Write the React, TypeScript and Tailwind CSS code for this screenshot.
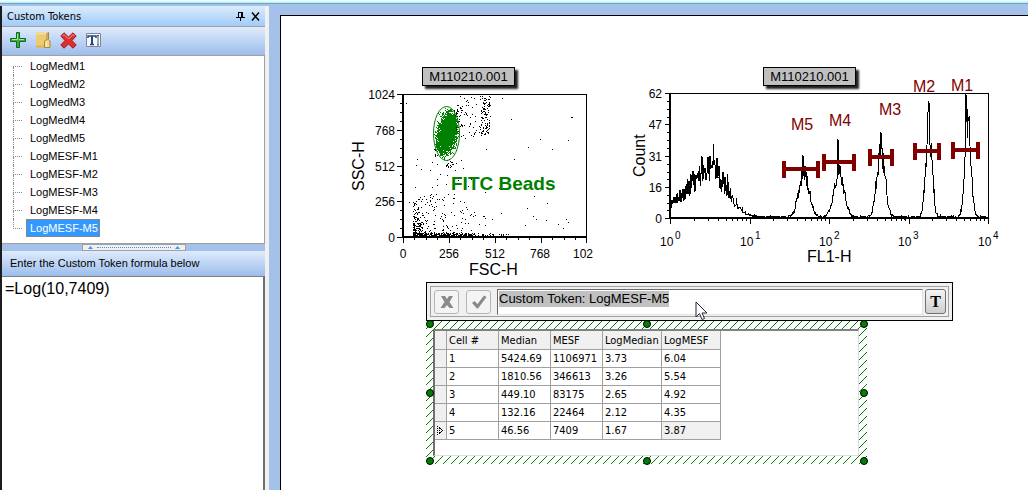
import React, { useState } from 'react';

const TOKENS = [
  'LogMedM1',
  'LogMedM2',
  'LogMedM3',
  'LogMedM4',
  'LogMedM5',
  'LogMESF-M1',
  'LogMESF-M2',
  'LogMESF-M3',
  'LogMESF-M4',
  'LogMESF-M5',
];

const COLUMNS = ['Cell #', 'Median', 'MESF', 'LogMedian', 'LogMESF'];

const ROWS = [
  ['1', '5424.69', '1106971', '3.73', '6.04'],
  ['2', '1810.56', '346613', '3.26', '5.54'],
  ['3', '449.10', '83175', '2.65', '4.92'],
  ['4', '132.16', '22464', '2.12', '4.35'],
  ['5', '46.56', '7409', '1.67', '3.87'],
];

// small seeded generator so the plots are the same on every render
const makeRandom = (seed: number) => () => {
  seed = (seed * 1664525 + 1013904223) % 4294967296;
  return seed / 4294967296;
};

const dot = (x: number, y: number) => `M${Math.round(x)} ${Math.round(y)}h1v1h-1z`;

const buildEvents = () => {
  const rnd = makeRandom(7);
  const bell = () => rnd() + rnd() + rnd() + rnd() - 2;
  let d = '';
  const fill = (n: number, x0: number, x1: number, y0: number, y1: number) => {
    for (let i = 0; i < n; i++) d += dot(x0 + rnd() * (x1 - x0), y0 + rnd() * (y1 - y0));
  };
  fill(85, 480, 490, 96, 134);
  fill(75, 456, 490, 96, 138);
  fill(35, 454, 462, 104, 128);
  fill(16, 445, 453, 160, 170);
  fill(10, 434, 440, 148, 156);
  fill(40, 414, 470, 158, 212);
  fill(70, 413, 445, 195, 234);
  fill(35, 440, 485, 212, 234);
  fill(38, 405, 582, 98, 234);
  // debris along the bottom of the plot
  for (let i = 0; i < 150; i++) d += dot(413 + rnd() * rnd() * 20, 235 - rnd() * rnd() * 42);
  for (let i = 0; i < 170; i++) d += dot(413 + rnd() * 62, 235 - rnd() * rnd() * 4);
  for (let i = 0; i < 60; i++) d += dot(413 + rnd() * 95, 235 - rnd() * 2);

  let beads = '';
  for (let i = 0; i < 3600; i++) {
    const a = bell();
    const x = 447 + bell() * 8 - a * 3;
    const y = 132 + a * 17;
    if (((x - 446) / 12) ** 2 + ((y - 133) / 26) ** 2 < 1) beads += dot(x, y);
  }
  return { debris: d, beads };
};

const PEAKS = [
  { x: 804, h: 46, s: 5, tip: 803, tipH: 62 },
  { x: 839, h: 46, s: 5, tip: 838, tipH: 79 },
  { x: 881, h: 68, s: 4, tip: 881, tipH: 84 },
  { x: 929, h: 94, s: 3, tip: 929, tipH: 117 },
  { x: 968, h: 98, s: 3, tip: 966, tipH: 124 },
];

const buildHistogram = () => {
  const rnd = makeRandom(21);
  const points: string[] = [];
  for (let x = 671; x < 988; x += 0.5) {
    const side = x < 712 ? 25 : 15;
    let h = 52 * Math.exp(-((x - 712) ** 2) / (2 * side * side));
    h *= 0.6 + rnd() * 0.6 + (rnd() > 0.93 ? 0.3 : 0);
    PEAKS.forEach(p => {
      h += p.h * Math.exp(-((x - p.x) ** 2) / (2 * p.s * p.s)) * (0.75 + rnd() * 0.45);
      if (x === p.tip) h = p.tipH;
    });
    h += rnd() * 2;
    points.push(`${x},${(218 - Math.min(h, 124)).toFixed(1)}`);
  }
  return points.join(' ');
};

const EVENTS = buildEvents();
const HISTOGRAM = buildHistogram();

const MARKERS = [
  { name: 'M5', x1: 784, x2: 818, y: 169, tx: 791, ty: 130 },
  { name: 'M4', x1: 824, x2: 854, y: 162, tx: 829, ty: 126 },
  { name: 'M3', x1: 870, x2: 892, y: 157, tx: 879, ty: 115 },
  { name: 'M2', x1: 915, x2: 939, y: 151, tx: 913, ty: 92 },
  { name: 'M1', x1: 953, x2: 978, y: 150, tx: 951, ty: 91 },
];

const PlotTitle: React.FC<{ className: string }> = ({ className }) => (
  <figcaption
    className={`flex h-[19px] w-[93px] items-center justify-center border border-black bg-[#c0c0c0] text-[13px] leading-none shadow-[3px_3px_2px_#222] ${className}`}
  >
    M110210.001
  </figcaption>
);

const ScatterPlot = () => (
  <figure className="shrink-0">
    <PlotTitle className="ml-[77px]" />
    <svg width="255" height="192" viewBox="345 86 255 192" className="block overflow-visible" fontSize="12">
      <path d={EVENTS.debris} shapeRendering="crispEdges" />
      <path d={EVENTS.beads} fill="#008000" shapeRendering="crispEdges" />
      <ellipse cx="446.500" cy="133.500" rx="13" ry="27" fill="none" stroke="#008000" />
      <g shapeRendering="crispEdges" stroke="#000" fill="none">
        <path d="M403 94.500H586.500V237" />
        <path d="M403.500 94V238M402.500 94V238M402 236.500H587M402 237.500H587" />
        {[94, 130, 166, 201, 237].map(y => (
          <path key={y} d={`M397 ${y + 0.5}H403`} />
        ))}
        {[403, 449, 495, 541, 586].map(x => (
          <path key={x} d={`M${x + 0.5} 237V243`} />
        ))}
        {[103, 112, 121, 139, 148, 157, 175, 184, 192, 210, 219, 228].map(y => (
          <path key={y} d={`M400 ${y + 0.5}H403`} />
        ))}
        {[414, 426, 437, 460, 472, 483, 506, 518, 529, 552, 564, 575].map(x => (
          <path key={x} d={`M${x + 0.5} 237V240`} />
        ))}
      </g>
      <g textAnchor="end">
        <text x="395" y="99">1024</text>
        <text x="395" y="135">768</text>
        <text x="395" y="171">512</text>
        <text x="395" y="206">256</text>
        <text x="395" y="242">0</text>
      </g>
      <g textAnchor="middle">
        <text x="403" y="258">0</text>
        <text x="449" y="258">256</text>
        <text x="495" y="258">512</text>
        <text x="540" y="258">768</text>
        <text x="583" y="258">102</text>
      </g>
      <text x="469" y="275" fontSize="16">FSC-H</text>
      <text transform="translate(364 191) rotate(-90)" fontSize="16">SSC-H</text>
      <text x="451" y="190" fontSize="19" fontWeight="bold" fill="#008000">FITC Beads</text>
    </svg>
  </figure>
);

const Histogram = () => (
  <figure className="shrink-0">
    <PlotTitle className="ml-[138px]" />
    <svg width="380" height="192" viewBox="625 86 380 192" className="block overflow-visible" fontSize="12">
      <g shapeRendering="crispEdges" stroke="#000" fill="none">
        <polyline points={HISTOGRAM} />
        <path d="M670 93.500H988.500V218" />
        <path d="M669.500 93V219M670.500 93V219M669 217.500H989M669 218.500H989" />
        {[93, 124, 156, 187, 218].map(y => (
          <path key={y} d={`M665 ${y + 0.5}H670`} />
        ))}
        {[101, 109, 117, 132, 140, 148, 164, 172, 179, 195, 203, 210].map(y => (
          <path key={y} d={`M667 ${y + 0.5}H670`} />
        ))}
        {[0, 1, 2, 3, 4].map(n => (
          <path key={n} d={`M${Math.round(670 + n * 79.5) + 0.5} 218V224`} />
        ))}
        {[0, 1, 2, 3].map(n =>
          [2, 3, 4, 5, 6, 7, 8, 9].map(k => (
            <path key={`${n}-${k}`} d={`M${Math.round(670 + (n + Math.log10(k)) * 79.5) + 0.5} 218V221`} />
          ))
        )}
      </g>
      <g textAnchor="end">
        <text x="662" y="98">62</text>
        <text x="662" y="129">47</text>
        <text x="662" y="161">31</text>
        <text x="662" y="192">16</text>
        <text x="662" y="223">0</text>
      </g>
      {[660, 740, 819, 898, 978].map((x, n) => (
        <g key={x}>
          <text x={x} y="246">10</text>
          <text x={x + 15} y="239" fontSize="10">{n}</text>
        </g>
      ))}
      <text x="807" y="262" fontSize="16">FL1-H</text>
      <text transform="translate(645 177) rotate(-90)" fontSize="16">Count</text>
      {MARKERS.map(m => (
        <g key={m.name}>
          <path
            d={`M${m.x1} ${m.y}H${m.x2}M${m.x1} ${m.y - 8}V${m.y + 9}M${m.x2} ${m.y - 8}V${m.y + 9}`}
            stroke="#800000"
            strokeWidth="4"
          />
          <text x={m.tx} y={m.ty} fontSize="16" fill="#800000">{m.name}</text>
        </g>
      ))}
    </svg>
  </figure>
);

const AddIcon = () => (
  <svg width="16" height="16" viewBox="0 0 16 16">
    <path d="M6.500 .5h3v6h6v3h-6v6h-3v-6h-6v-3h6z" fill="#3fae3f" stroke="#0b6b1c" />
    <path d="M7.500 2v5.500H2M9 7.500h5" fill="none" stroke="#a5e6a0" />
  </svg>
);

const FolderIcon = () => (
  <svg width="16" height="16" viewBox="0 0 16 16">
    <path d="M1 .5h11v15H1z" fill="#eccb72" />
    <path d="M1 .5h11v2H1z" fill="#f5dd98" />
    <path d="M1 13.500h11v2H1z" fill="#d9b356" />
    <path d="M9.500 15.500V9.500l1-1.500h1.500V1.500l1.500-1v7l1.500 1.500v6.500z" fill="#f0d58a" stroke="#a98638" />
    <path d="M11.500 10v5" stroke="#fff2c4" />
  </svg>
);

const DeleteIcon = () => (
  <svg width="17" height="17" viewBox="0 0 17 17">
    <path
      d="M4 .8 8.500 5 13 .8 16.200 4 12 8.500l4.200 4.500-3.200 3.200-4.500-4.200L4 16.200.8 13 5 8.500.8 4z"
      fill="#de2d2d"
      stroke="#a81818"
      strokeLinejoin="round"
    />
    <path d="M2.500 4 4 2.500 8.500 7 13 2.500 14.500 4" fill="none" stroke="#f79a9a" />
  </svg>
);

const TextIcon = () => (
  <svg width="15" height="15" viewBox="0 0 15 15">
    <path d="M.5 .5h14v13H.5z" fill="#f5f8ff" stroke="#7d8896" />
    <path d="M2 5V3h8v2M4 11.500h4" fill="none" stroke="#27477f" strokeWidth="1.500" />
    <path d="M5 3h2v8H5z" fill="#27477f" />
    <path d="M12 3v9M11 2.500h2M11 12h2" stroke="#555" />
  </svg>
);

const TOOLS = [
  { label: 'Add token', Icon: AddIcon },
  { label: 'Edit token', Icon: FolderIcon },
  { label: 'Delete token', Icon: DeleteIcon },
  { label: 'Insert text', Icon: TextIcon },
];

const TokenTree: React.FC<{ selected: string; onSelect: (t: string) => void }> = ({ selected, onSelect }) => (
  <ul className="h-[188px] border-r border-b border-[#a0a0a0] bg-white pt-px pl-[11px]">
    {TOKENS.map((token, i) => (
      <li key={token} className="flex h-[18px] items-center">
        <span className="flex h-full w-[9px] flex-col">
          <span className={`h-[10px] border-b border-dotted border-[#888] ${i > 0 ? 'border-l' : ''}`} />
          <span className={`flex-1 border-dotted border-[#888] ${i < TOKENS.length - 1 ? 'border-l' : ''}`} />
        </span>
        <button
          type="button"
          onClick={() => onSelect(token)}
          className={`ml-1 h-[18px] border pr-px pl-[3px] text-[11px] leading-4 ${
            token === selected
              ? 'border-dotted border-[#cc7722] bg-[#3399ff] text-white'
              : 'border-transparent text-black'
          }`}
        >
          {token}
        </button>
      </li>
    ))}
  </ul>
);

const HANDLES = [
  '-top-px left-0',
  '-top-px left-1/2 -translate-x-1/2',
  '-top-px -right-px',
  'top-1/2 left-0 -translate-y-1/2',
  'top-1/2 -right-px -translate-y-1/2',
  '-bottom-px left-0',
  '-bottom-px left-1/2 -translate-x-1/2',
  '-bottom-px -right-px',
];

const StatsGrid = () => (
  <div className="relative w-[441px] py-2 pr-2 pl-[7px]">
    <svg className="absolute inset-0 h-full w-full" aria-hidden="true">
      <defs>
        <pattern id="hatch" width="8" height="8" patternUnits="userSpaceOnUse">
          <path d="M0 8L8 0" stroke="#008000" shapeRendering="crispEdges" />
        </pattern>
      </defs>
      <rect width="100%" height="100%" fill="url(#hatch)" />
    </svg>
    <div className="relative h-[127px] border-t-2 border-r border-b border-l-2 border-t-[#808080] border-r-[#e0e0e0] border-b-[#e0e0e0] border-l-[#707070] bg-white">
      <table className="w-[286px] table-fixed border-separate border-spacing-0 text-left font-['DejaVu_Sans_Condensed','DejaVu_Sans',sans-serif] text-[11px] leading-4">
        <colgroup>
          <col className="w-[12px]" />
          <col className="w-[52px]" />
          <col className="w-[52px]" />
          <col className="w-[52px]" />
          <col className="w-[59px]" />
          <col className="w-[59px]" />
        </colgroup>
        <thead>
          <tr className="h-[19px] bg-[#f0f0f0]">
            <th className="border-r border-b border-[#a0a0a0] p-0" aria-label="Current row" />
            {COLUMNS.map(c => (
              <th key={c} className="border-r border-b border-[#a0a0a0] p-0 pt-[2px] pl-[2px] font-normal whitespace-nowrap">{c}</th>
            ))}
          </tr>
        </thead>
        <tbody>
          {ROWS.map((row, r) => (
            <tr key={row[0]} className="h-[18px]">
              <td className="border-r border-b border-[#a0a0a0] bg-[#f0f0f0] p-0">
                {r === ROWS.length - 1 && (
                  <svg width="7" height="9" viewBox="0 0 7 9" className="ml-[2px] block" shapeRendering="crispEdges">
                    <path
                      d="M0 0h1v1h-1zM0 2h1v1h-1zM0 4h1v1h-1zM0 6h1v1h-1zM0 8h1v1h-1zM2 1h1v2h-1zM3 2h1v1h-1zM4 3h1v1h-1zM5 4h1v1h-1zM4 5h1v1h-1zM3 6h1v1h-1zM2 6h1v2h-1zM2 4h1v1h-1z"
                      fill="#000"
                    />
                  </svg>
                )}
              </td>
              {row.map((cell, c) => (
                <td
                  key={c}
                  className={`border-r border-b border-[#a0a0a0] p-0 pt-px pl-[2px] ${
                    r === ROWS.length - 1 && c === row.length - 1 ? 'bg-[#f0f0f0]' : ''
                  }`}
                >
                  {cell}
                </td>
              ))}
            </tr>
          ))}
        </tbody>
      </table>
    </div>
    {HANDLES.map(pos => (
      <span key={pos} className={`absolute h-2 w-2 rounded-full border border-black bg-[#008000] ${pos}`} />
    ))}
  </div>
);

const FormulaBar: React.FC<{ token: string }> = ({ token }) => (
  <div className="relative w-[527px] border border-black bg-[#f0f0f0] p-[3px]">
    <div className="flex h-[31px] items-center border border-[#a0a0a0] bg-[#f0f0f0] pr-[2px] pl-[3px]">
      <button type="button" aria-label="Cancel" className="flex h-6 w-[25px] items-center justify-center rounded-[3px] border border-[#b5b5b5] bg-[#f4f4f4]">
        <svg width="14" height="12" viewBox="0 0 14 12">
          <path d="M1 0h4l2 3 2-3h4L9.500 6l4 6h-4L7 9l-2.500 3h-4l4-6z" fill="#8a8a8a" />
        </svg>
      </button>
      <button type="button" aria-label="Accept" className="ml-[7px] flex h-6 w-[25px] items-center justify-center rounded-[3px] border border-[#b5b5b5] bg-[#f4f4f4]">
        <svg width="16" height="14" viewBox="0 0 16 14">
          <path d="M1 8l2.500-2L6.500 9 13 .5 15.500 2 7 13.500H6z" fill="#8a8a8a" />
        </svg>
      </button>
      <div className="ml-[6px] flex h-[26px] flex-1 items-start border-t border-r border-b border-l border-t-[#696969] border-r-[#e3e3e3] border-b-[#e3e3e3] border-l-[#696969] bg-white pt-px pl-px">
        <input
          type="text"
          aria-label="Formula"
          value={token}
          readOnly
          className="field-sizing-content h-4 bg-[#c0c0c0] text-[13px] leading-4 outline-none"
        />
      </div>
      <button
        type="button"
        aria-label="Text format"
        className="ml-[2px] flex h-[25px] w-[21px] items-center justify-center rounded-[3px] border border-[#707070] bg-linear-to-b from-[#f4f4f4] to-[#cfcfcf] font-['Liberation_Serif',serif] text-base leading-none font-bold"
      >
        T
      </button>
    </div>
    <svg width="13" height="20" viewBox="0 0 13 20" className="absolute top-[18px] left-[268px]" aria-hidden="true">
      <path d="M1 1v15l3.500-3.500L7 18.500l2.500-1L7 12h5z" fill="#fff" stroke="#26263c" />
    </svg>
  </div>
);

const App = () => {
  const [selected, setSelected] = useState('LogMESF-M5');
  const [formula, setFormula] = useState('=Log(10,7409)');

  return (
    <div className="min-h-screen bg-white pr-[3px] pb-[5px] font-['Liberation_Sans',Arial,sans-serif] text-black">
      <div className="flex min-h-[calc(100vh-5px)] flex-col bg-[#a3c1e9]">
        <div className="h-1 border-b border-[#6fa3b8] bg-linear-to-b from-white to-[#a8f0fa]" />
        <div className="flex flex-1">
          <aside className="mt-[2px] flex w-[269px] shrink-0 flex-col border-r-4 border-l-2 border-r-[#f0f0f0] border-l-[#1c1c1c]">
            <header className="flex h-[21px] items-center border-b border-[#a0a0a0] bg-linear-to-b from-[#dcecfd] to-[#a0cbf8] pr-[5px] pl-[5px]">
              <h1 className="flex-1 pt-[2px] font-['DejaVu_Sans_Condensed','DejaVu_Sans',sans-serif] text-[11px]">Custom Tokens</h1>
              <button type="button" aria-label="Pin panel" className="mr-[6px]">
                <svg width="9" height="9" viewBox="0 0 9 9" className="block" shapeRendering="crispEdges">
                  <path d="M2.500 5V.5h4V5M5.500 0v5M0 5.500h9M4.500 5v4" fill="none" stroke="#000" />
                </svg>
              </button>
              <button type="button" aria-label="Close panel">
                <svg width="9" height="9" viewBox="0 0 9 9" className="block">
                  <path d="M1 .5l7 8M8 .5l-7 8" stroke="#000" strokeWidth="1.500" />
                </svg>
              </button>
            </header>
            <div className="flex h-[29px] items-start gap-[9px] border-b border-[#a0a0a0] bg-linear-to-b from-[#dfebfc] to-[#9dbdec] pt-[5px] pl-2">
              {TOOLS.map(({ label, Icon }) => (
                <button key={label} type="button" aria-label={label} className="flex h-4 items-center">
                  <Icon />
                </button>
              ))}
            </div>
            <TokenTree selected={selected} onSelect={setSelected} />
            <div className="flex h-[7px] justify-center">
              <div className="flex w-[104px] items-center gap-1 border border-[#a0a0a0] bg-[#f0f0f0] px-[5px]">
                <svg width="5" height="3" viewBox="0 0 5 3"><path d="M0 3L2.500 0 5 3z" fill="#3399ff" /></svg>
                <span className="flex-1 border-t border-dotted border-[#3399ff]" />
                <svg width="5" height="3" viewBox="0 0 5 3"><path d="M0 3L2.500 0 5 3z" fill="#3399ff" /></svg>
              </div>
            </div>
            <label
              htmlFor="formula"
              className="flex h-[25px] items-center bg-linear-to-b from-[#dfebfc] to-[#9dbdec] pl-2 text-[11px]"
            >
              Enter the Custom Token formula below
            </label>
            <textarea
              id="formula"
              value={formula}
              onChange={e => setFormula(e.target.value)}
              className="block w-full flex-1 resize-none border-t border-r-2 border-t-[#808080] border-r-[#707070] bg-white px-[3px] pt-[2px] text-base leading-5 outline-none"
            />
          </aside>

          <main className="mt-[11px] ml-[11px] min-w-0 flex-1 overflow-hidden border-t border-l border-black bg-white">
            <div className="flex gap-[25px] pt-[51px] pl-16">
              <ScatterPlot />
              <Histogram />
            </div>
            <div className="mt-1 ml-[145px]">
              <FormulaBar token={`Custom Token: ${selected}`} />
              <StatsGrid />
            </div>
          </main>
        </div>
      </div>
    </div>
  );
};

export default App;
